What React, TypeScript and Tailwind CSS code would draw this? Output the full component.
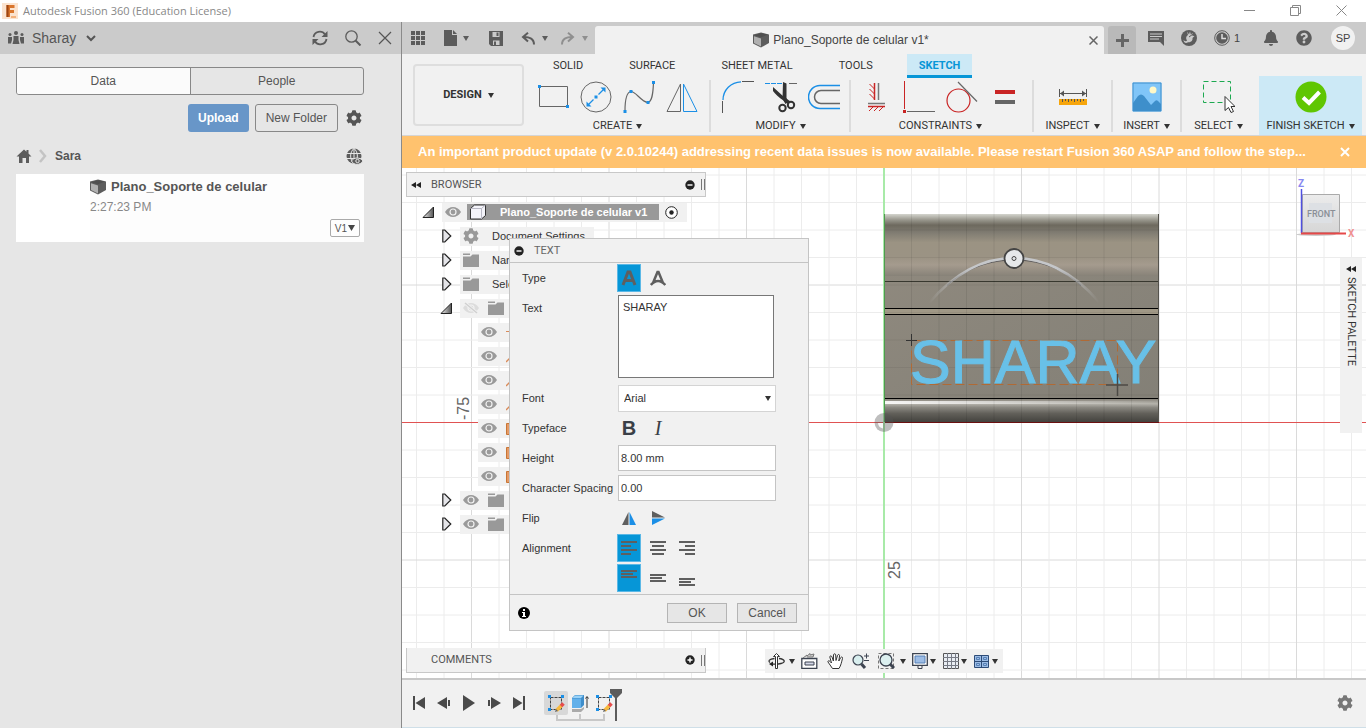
import React from "react";
import { FaBell, FaCog, FaQuestionCircle } from "react-icons/fa";

const caps = "font-[Roboto,'Liberation_Sans',sans-serif] text-[11px] leading-4";

function Caret({ className = "text-[#333]" }) {
  return (
    <svg width="6" height="5" viewBox="0 0 6 5" className={`shrink-0 ${className}`}>
      <path d="M0 0h6L3 5z" fill="currentColor" />
    </svg>
  );
}

function Cube({ size = 16 }) {
  return (
    <svg width={size} height={size} viewBox="0 0 16 16" className="shrink-0">
      <path d="M0 2.500 8 .5l8 2v8.500L8 15.500 0 11.500z" fill="#5c5c5c" />
      <path d="M1 4.200l7 2.300v8L1 11z" fill="#b0b0b0" />
      <path d="M1 3.200 8 1.300 15 2.600 8 5.300z" fill="#4f4f4f" />
    </svg>
  );
}

function Eye({ off = false }) {
  return (
    <svg width="16" height="12" viewBox="0 0 16 12" className="shrink-0">
      <path d="M0 6C2 2.500 5 1 8 1s6 1.500 8 5c-2 3.500-5 5-8 5S2 9.500 0 6z" fill={off ? "#dcdcdc" : "#9a9a9a"} />
      <circle cx="8" cy="6" r="3" fill="none" stroke="#f1f1f1" strokeWidth="1.200" />
      {off && <path d="M2 1l12 10" stroke="#f1f1f1" strokeWidth="3" />}
      {off && <path d="M2 1l12 10" stroke="#d0d0d0" strokeWidth="1.500" />}
    </svg>
  );
}

function Folder() {
  return (
    <svg width="16" height="14" viewBox="0 0 16 14" className="shrink-0">
      <path d="M0 .5h7v1.500H0zM0 3.500h7.500l2-2H16V14H0z" fill="#999" />
    </svg>
  );
}

function Rewind({ className = "" }) {
  return (
    <svg width="10" height="6" viewBox="0 0 10 6" className={className}>
      <path d="M5 0v6L0 3zM10 0v6L5 3z" fill="#222" />
    </svg>
  );
}

function RoundSign({ plus = false }) {
  return (
    <svg width="10" height="10" viewBox="0 0 10 10">
      <circle cx="5" cy="5" r="4.700" fill="#222" />
      <path d={plus ? "M2.500 5h5M5 2.500v5" : "M2.500 5h5"} stroke="#fff" strokeWidth="1.400" />
    </svg>
  );
}

function Expander({ open = false }) {
  return open ? (
    <svg width="12" height="12" viewBox="0 0 12 12" className="shrink-0">
      <defs>
        <linearGradient id="tri" x1="0" x2="1" y1="0" y2="0">
          <stop offset="0" stopColor="#eee" />
          <stop offset="1" stopColor="#555" />
        </linearGradient>
      </defs>
      <path d="M11.500 1v10.500H1z" fill="url(#tri)" stroke="#222" />
    </svg>
  ) : (
    <svg width="10" height="14" viewBox="0 0 10 14" className="shrink-0">
      <path d="M.8 1h2l6 6-6 6h-2z" fill="#e4e4e8" stroke="#222" strokeWidth="1.200" />
    </svg>
  );
}

function TitleBar() {
  return (
    <header className="flex h-[22px] shrink-0 items-center bg-white pr-[2px] pl-[2px] text-[#888]">
      <svg width="16" height="16" viewBox="0 0 16 16">
        <path d="M0 0h16v16H0z" fill="#fbe3cf" />
        <path d="M4.500 2h8v3H8v2h4v3H8v4H4.500z" fill="#d9752c" />
        <path d="M4.500 2h2v12h-2z" fill="#9c4513" />
        <path d="M9 13h5v2H9z" fill="#f3b27d" />
      </svg>
      <h1 className="ml-[5px] font-['Open_Sans','Noto_Sans',sans-serif] text-[11px] leading-4">Autodesk Fusion 360 (Education License)</h1>
      <div className="ml-auto flex items-center pb-[2px]">
        <button aria-label="Minimize" className="flex h-5 w-[46px] items-center justify-center">
          <svg width="11" height="11" viewBox="0 0 11 11"><path d="M0 5.500h11" stroke="#888" /></svg>
        </button>
        <button aria-label="Restore" className="flex h-5 w-[46px] items-center justify-center">
          <svg width="11" height="11" viewBox="0 0 11 11" fill="none" stroke="#888"><path d="M.5 2.500h8v8h-8zM2.500 2.500v-2h8v8h-2" /></svg>
        </button>
        <button aria-label="Close" className="flex h-5 w-[46px] items-center justify-center">
          <svg width="11" height="11" viewBox="0 0 11 11" stroke="#888"><path d="M.5.5l10 10M10.500.5l-10 10" /></svg>
        </button>
      </div>
    </header>
  );
}

function DataPanel() {
  return (
    <aside className="w-[402px] shrink-0 border-r border-[#8a8a8a] bg-[#e6e6e6] text-[#555]">
      <div className="flex h-8 items-center bg-[#cbcbcb] pr-[9px] pl-2">
        <svg width="16" height="14" viewBox="0 0 16 14" fill="#5c5c5c">
          <circle cx="8" cy="2" r="2" />
          <circle cx="2" cy="3.500" r="1.500" />
          <circle cx="14" cy="3.500" r="1.500" />
          <path d="M5.500 5h5v4l1 4h-7l1-4zM0 6h4v3l-1 3.500H0zM12 6h4v6.500h-3L12 9z" />
        </svg>
        <button className="ml-2 flex items-center gap-[10px] text-[14px] leading-5">
          Sharay
          <svg width="10" height="7" viewBox="0 0 10 7" fill="none" stroke="#555" strokeWidth="2"><path d="M1 1l4 4 4-4" /></svg>
        </button>
        <div className="ml-auto flex items-center gap-4">
          <button aria-label="Refresh">
            <svg width="17" height="16" viewBox="0 0 17 16" fill="none" stroke="#5c5c5c" strokeWidth="1.800">
              <path d="M1.500 7A6.300 6.300 0 0 1 13 4.500M14.500 9A6.300 6.300 0 0 1 3 11.500" />
              <path d="M15.500 1v6h-6zM.5 15V9h6z" fill="#5c5c5c" stroke="none" />
            </svg>
          </button>
          <button aria-label="Search">
            <svg width="17" height="16" viewBox="0 0 17 16" fill="none" stroke="#5c5c5c">
              <circle cx="6.500" cy="6.500" r="5.700" strokeWidth="1.300" />
              <path d="M10.500 10.500l5 5" strokeWidth="2" />
            </svg>
          </button>
          <button aria-label="Close panel">
            <svg width="14" height="14" viewBox="0 0 14 14" stroke="#555" strokeWidth="1.200"><path d="M1 1l12 12M13 1L1 13" /></svg>
          </button>
        </div>
      </div>

      <div className="pt-[13px] pr-[37px] pl-4">
        <div className="flex h-7 overflow-hidden rounded-[3px] border border-[#888] text-[12px]">
          <button className="flex-1 border-r border-[#888] bg-[#fbfbfb]">Data</button>
          <button className="flex-1">People</button>
        </div>
        <div className="mt-[9px] flex h-7 items-center justify-end gap-[6px] text-[12px]">
          <button className="h-7 rounded-[3px] bg-[#6896c8] px-[10px] font-bold text-white">Upload</button>
          <button className="h-7 rounded-[3px] border border-[#888] px-[10px]">New Folder</button>
          <button aria-label="Settings" className="mr-[2px] ml-[2px]"><FaCog size={16} /></button>
        </div>
        <div className="mt-4 flex h-4 items-center">
          <svg width="16" height="14" viewBox="0 0 16 14" fill="#5c5c5c">
            <path d="M8 .5l2.500 2.200V1h2v3.500L15.500 7.500H13V14h-3V9H6.500v5H3V7.500H.5z" />
          </svg>
          <svg width="8" height="14" viewBox="0 0 8 14" className="ml-[7px]" fill="none" stroke="#c4c4c4" strokeWidth="2.500"><path d="M1 1l5 6-5 6" /></svg>
          <a href="#sara" className="ml-2 text-[12px] font-bold">Sara</a>
          <svg width="17" height="17" viewBox="0 0 17 17" className="mr-[1px] ml-auto">
            <circle cx="8" cy="8" r="7.500" fill="#5c5c5c" />
            <path d="M0 5.500h16M0 10.500h16M8 0v16M8 .5C3.500 4 3.500 12 8 15.500M8 .5c4.500 3.500 4.500 11.500 0 15" fill="none" stroke="#e6e6e6" />
            <path d="M5.500 13c2-4 9-4 11.500 0-2.500 4.500-9.500 4.500-11.500 0z" fill="#5c5c5c" stroke="#e6e6e6" />
            <circle cx="11.500" cy="13" r="1.700" fill="none" stroke="#e6e6e6" />
          </svg>
        </div>
        <article className="mt-[10px] flex h-[68px] bg-[#fdfdfd]">
          <div className="w-[74px] shrink-0 bg-white" />
          <div className="flex-1 pt-[5px]">
            <h2 className="flex items-center gap-[5px] text-[13px] leading-4 font-bold"><Cube />Plano_Soporte de celular</h2>
            <p className="mt-1 text-[12px] leading-4 text-[#888]">2:27:23 PM</p>
          </div>
          <button className="mr-1 mb-[5px] flex h-[18px] items-center gap-[1px] self-end rounded-[2px] border border-[#aaa] px-1 text-[10px]">
            V1<svg width="7" height="6" viewBox="0 0 7 6"><path d="M0 0h7L3.500 6z" fill="#444" /></svg>
          </button>
        </article>
      </div>
    </aside>
  );
}

function TabBar() {
  return (
    <div className="flex h-8 shrink-0 items-end bg-[#cbcbcb] text-[#5c5c5c]">
      <div className="flex h-8 w-[193px] shrink-0 items-center pl-[9px]">
        <button aria-label="Data panel">
          <svg width="14" height="14" viewBox="0 0 14 14" fill="#5c5c5c">
            <path d="M0 0h4v4H0zM5 0h4v4H5zM10 0h4v4h-4zM0 5h4v4H0zM5 5h4v4H5zM10 5h4v4h-4zM0 10h4v4H0zM5 10h4v4H5zM10 10h4v4h-4z" />
          </svg>
        </button>
        <button aria-label="File" className="ml-[19px] flex items-center gap-[6px]">
          <svg width="13" height="16" viewBox="0 0 13 16" fill="#5c5c5c"><path d="M0 0h8v5h5v11H0zM9 0l4 4H9z" /></svg>
          <Caret className="text-[#5c5c5c]" />
        </button>
        <button aria-label="Save" className="ml-5">
          <svg width="14" height="15" viewBox="0 0 14 15">
            <path d="M0 0h14v15H2l-2-2z" fill="#5c5c5c" />
            <path d="M3.500 1h7v5h-7zM4 9.500h6.500V14H4z" fill="#cbcbcb" />
            <path d="M7.500 1.500h2v3.500h-2zM5 10.500h2V14H5z" fill="#5c5c5c" />
          </svg>
        </button>
        <button aria-label="Undo" className="ml-[18px] flex items-center gap-[7px]">
          <svg width="14" height="13" viewBox="0 0 14 13" fill="none" stroke="#5c5c5c" strokeWidth="2">
            <path d="M2 5c6-.5 11 1.500 11 7.500M7 .8 2 5l5 4.500" />
          </svg>
          <Caret className="text-[#5c5c5c]" />
        </button>
        <button aria-label="Redo" className="ml-[13px] flex items-center gap-[7px]">
          <svg width="14" height="13" viewBox="0 0 14 13" fill="none" stroke="#8f8f8f" strokeWidth="2">
            <path d="M12 5C6 4.500 1 6.500 1 12.500M7 .8 12 5 7 9.500" />
          </svg>
          <Caret className="text-[#8f8f8f]" />
        </button>
      </div>
      <div className="flex h-7 min-w-0 flex-1 items-center rounded-t-[3px] bg-[#f1f1f1] pr-[6px]">
        <div className="flex flex-1 items-center justify-center gap-1 pr-[2px] text-[12px] text-[#444]"><Cube />Plano_Soporte de celular v1*</div>
        <button aria-label="Close document">
          <svg width="9" height="9" viewBox="0 0 9 9" stroke="#666" strokeWidth="1.500"><path d="M.5.5l8 8M8.500.5l-8 8" /></svg>
        </button>
      </div>
      <button aria-label="New document" className="ml-1 flex h-7 w-7 shrink-0 items-center justify-center rounded-t-[3px] bg-[#b9b9b9]">
        <svg width="13" height="13" viewBox="0 0 13 13" stroke="#666" strokeWidth="3"><path d="M0 6.500h13M6.500 0v13" /></svg>
      </button>
      <div className="flex h-8 w-[230px] shrink-0 items-center pl-3">
        <button aria-label="Comments">
          <svg width="16" height="16" viewBox="0 0 16 16">
            <path d="M0 1h16v15l-4-4H0z" fill="#5c5c5c" />
            <path d="M2 4h12M2 6.500h12M2 9h9" stroke="#cbcbcb" />
          </svg>
        </button>
        <button aria-label="Extensions" className="ml-[17px]">
          <svg width="16" height="16" viewBox="0 0 16 16">
            <circle cx="8" cy="8" r="8" fill="#5c5c5c" />
            <path d="M6 1.500l2 3 1-3 .8 3 2-1.500-.6 2.800 2.300.2-2 2c.5 3-2 4.500-4.500 4.200C4.500 14 2.500 12 2.500 10c1.500 1.500 3 1.500 3.500.5C4.500 8.500 5 6 7 5z" fill="#cbcbcb" />
            <path d="M8 7l4-3" stroke="#5c5c5c" />
          </svg>
        </button>
        <button aria-label="Job status" className="ml-[17px] flex items-center gap-1 text-[11px] text-[#444]">
          <svg width="16" height="16" viewBox="0 0 16 16">
            <circle cx="8" cy="8" r="7.300" fill="none" stroke="#5c5c5c" />
            <circle cx="8" cy="8" r="5.800" fill="#5c5c5c" />
            <path d="M8 4v4.500h4" fill="none" stroke="#ddd" strokeWidth="1.500" />
          </svg>
          1
        </button>
        <button aria-label="Notifications" className="ml-[23px]"><FaBell size={16} /></button>
        <button aria-label="Help" className="ml-[17px]"><FaQuestionCircle size={16} /></button>
        <button className="ml-[19px] h-6 w-6 rounded-full bg-[#f1f1f1] text-[11px] text-[#444]">SP</button>
      </div>
    </div>
  );
}

function Tool({ label, children }: { label: string; children: React.ReactNode }) {
  return (
    <button aria-label={label} className="h-8 w-8 shrink-0">
      <svg width="32" height="32" viewBox="0 0 32 32" fill="none">{children}</svg>
    </button>
  );
}

function Group({ name, className, children }: { name: string; className: string; children: React.ReactNode }) {
  return (
    <div className={`flex flex-col items-center pt-[3px] ${className}`}>
      <div className="flex gap-[11px]">{children}</div>
      <button className={`mt-[5px] flex items-center gap-1 whitespace-nowrap text-[#333] ${caps}`}>
        {name} <Caret />
      </button>
    </div>
  );
}

function Divider() {
  return <div className="mt-[2px] h-[52px] w-[2px] shrink-0 bg-[#dcdcdc]" />;
}

function Ribbon() {
  return (
    <div className="flex h-[82px] shrink-0 border-b border-[#d5d5d5] bg-[#f1f1f1]">
      <button className={`mt-[10px] ml-[11px] flex h-[62px] w-[111px] shrink-0 items-center justify-center gap-[6px] rounded-[4px] border-2 border-[#dedede] font-bold text-[#333] ${caps}`}>
        DESIGN <Caret />
      </button>
      <div className="min-w-0 flex-1">
        <nav className={`flex h-6 gap-[22px] pl-[17px] text-[#333] ${caps}`}>
          <button className="px-3">SOLID</button>
          <button className="px-3">SURFACE</button>
          <button className="px-3">SHEET METAL</button>
          <button className="px-3">TOOLS</button>
          <button className="border-b-[3px] border-[#0696d7] bg-[#cce9f6] px-3 pt-[3px] font-bold text-[#0696d7]">SKETCH</button>
        </nav>
        <div className="flex">
          <Group name="CREATE" className="w-[185px] pl-[2px]">
            <Tool label="Rectangle">
              <path d="M2.500 5.500h28v20h-28z" stroke="#666" />
              <path d="M1 4h3v3H1zM29 24h3v3h-3z" fill="#1b8fe6" />
            </Tool>
            <Tool label="Circle">
              <circle cx="16" cy="16" r="15" stroke="#666" />
              <path d="M8.500 23.500l5-5M18.500 13.500l5-5" stroke="#1b8fe6" strokeWidth="1.300" />
              <path d="M6.500 25.500v-5l5 5zM25.500 6.500v5l-5-5zM14.500 14.500h3v3h-3z" fill="#1b8fe6" />
            </Tool>
            <Tool label="Spline">
              <path d="M2 30C2 18 4 11 8 10.500c5 0 10 10.500 17 11 4-1 5-8 5.500-20" stroke="#666" strokeWidth="1.200" />
              <path d="M.5 29h3v3h-3zM6.500 9h3v3h-3zM23.500 20h3v3h-3zM29 0h3v3h-3z" fill="#1b8fe6" />
            </Tool>
            <Tool label="Mirror">
              <path d="M14.500 3v27.500H1z" stroke="#666" />
              <path d="M17.500 3v27.500H31z" stroke="#1b8fe6" />
            </Tool>
          </Group>
          <Divider />
          <Group name="MODIFY" className="w-[138px] pl-px">
            <Tool label="Fillet">
              <path d="M1 19C1 9 9 1 19 .8" stroke="#1b8fe6" strokeWidth="1.300" />
              <path d="M20 .5h12M.5 20v12" stroke="#555" />
            </Tool>
            <Tool label="Trim">
              <path d="M0 2.500h17" stroke="#1b8fe6" strokeDasharray="5 1" />
              <path d="M24 2.500h8" stroke="#666" />
              <path d="M18 1l3.500 1.500V17l2 4-3 2-3-5z" fill="#333" />
              <path d="M8 6l10.500 9.500 7 5-2 2.500-5-3.500C14 16.500 10 13 8 10z" fill="#333" />
              <circle cx="17.500" cy="27" r="3.200" stroke="#333" strokeWidth="2" />
              <circle cx="26" cy="24" r="3.200" stroke="#333" strokeWidth="2" />
            </Tool>
            <Tool label="Offset">
              <path d="M32 4.500H12a11.500 11.500 0 0 0 0 23h20" stroke="#1b8fe6" strokeWidth="1.500" />
              <path d="M32 9.500H13a6.500 6.500 0 0 0 0 13h19" stroke="#666" strokeWidth="1.500" />
            </Tool>
          </Group>
          <Divider />
          <Group name="CONSTRAINTS" className="w-[181px] pr-[2px]">
            <Tool label="Horizontal/Vertical">
              <path d="M14.500 2v17M8 25.500h17" stroke="#c92424" strokeWidth="1.500" />
              <path d="M9.500 3l5 5M9.500 8l5 5M9.500 13l5 5M9 30l4-4M14 30l4-4M19 30l4-4" stroke="#c92424" />
              <path d="M18.500 2v17M8 22.500h17" stroke="#777" strokeWidth="1.500" />
            </Tool>
            <Tool label="Perpendicular">
              <path d="M1.500 0v28" stroke="#c92424" />
              <path d="M0 29h3v3H0z" fill="#c92424" />
              <path d="M4 30.500h28" stroke="#666" />
            </Tool>
            <Tool label="Tangent">
              <circle cx="12.500" cy="19.500" r="11.500" stroke="#c92424" strokeWidth="1.200" />
              <path d="M12 1l19 19.500" stroke="#666" strokeWidth="1.200" />
            </Tool>
            <Tool label="Equal">
              <path d="M6 9h20v4H6z" fill="#c92424" />
              <path d="M6 19h20v4H6z" fill="#666" />
            </Tool>
          </Group>
          <Divider />
          <Group name="INSPECT" className="w-[77px]">
            <Tool label="Measure">
              <path d="M2.500 8v8M29.500 8v8M3 12.500h26" stroke="#555" />
              <path d="M3 12.500l4-3v6zM29 12.500l-4-3v6z" fill="#555" />
              <path d="M2 18h28v6H2z" fill="#f6a50c" />
              <path d="M5.500 18v3M8.500 18v2M11.500 18v3M14.500 18v2M17.500 18v3M20.500 18v2M23.500 18v3M26.500 18v2" stroke="#555" />
            </Tool>
          </Group>
          <Divider />
          <Group name="INSERT" className="w-[67px]">
            <Tool label="Insert image">
              <path d="M1.500 1.500h29v29h-29z" fill="#80c5f8" />
              <path d="M2 22l5-7c2-2 4-2 6 0l7 9 4-4c1-1 2-1 3 0l3 3v7H2z" fill="#3e8fcb" />
              <path d="M2 2h28v28H2z" stroke="#3e8fcb" />
              <circle cx="22" cy="9" r="3.500" fill="#fff8c8" />
            </Tool>
          </Group>
          <Divider />
          <Group name="SELECT" className="w-[73px]">
            <Tool label="Select">
              <path d="M.5.5h27v21H.5z" stroke="#1ca950" strokeDasharray="5 3" />
              <path d="M22 15.500v14l3.500-3 2.500 5 2.500-1-2.500-5h4z" fill="#fff" stroke="#333" />
            </Tool>
          </Group>
          <div className="-mt-[2px] mr-1 ml-auto h-[59px] bg-[#cce9f6] pt-[2px]">
            <Group name="FINISH SKETCH" className="w-[103px]">
              <Tool label="Finish sketch">
                <circle cx="16" cy="16" r="15.500" fill="#60c602" />
                <path d="M8 16.500l6 5.500 10.500-11" stroke="#fff" strokeWidth="4" />
              </Tool>
            </Group>
          </div>
        </div>
      </div>
    </div>
  );
}

function UpdateBanner() {
  return (
    <div role="alert" className="flex h-8 shrink-0 items-center bg-[#ffc26e] pr-4 pl-4 text-[13px] font-bold text-white">
      <p className="min-w-0 flex-1 truncate">An important product update (v 2.0.10244) addressing recent data issues is now available. Please restart Fusion 360 ASAP and follow the step...</p>
      <button aria-label="Dismiss" className="ml-4">
        <svg width="10" height="10" viewBox="0 0 10 10" stroke="#fff" strokeWidth="2"><path d="M1 1l8 8M9 1L1 9" /></svg>
      </button>
    </div>
  );
}

// origin sits at (482, 254.5) and one cell is 27.5 units wide
function Viewport() {
  const steps = Array.from({ length: 81 }, (_, i) => i - 30);
  const shade = (i: number) => (i % 5 === 0 ? "#dadada" : "#ececec");
  return (
    <svg className="absolute inset-0 h-full w-full">
      <defs>
        <linearGradient id="top" x1="0" x2="0" y1="0" y2="1">
          <stop offset="0" stopColor="#d4d5ce" />
          <stop offset=".1" stopColor="#96948a" />
          <stop offset=".18" stopColor="#6d695e" />
          <stop offset=".3" stopColor="#807c72" />
          <stop offset=".46" stopColor="#9b9383" />
          <stop offset=".7" stopColor="#9b9384" />
          <stop offset=".82" stopColor="#a59b8e" />
          <stop offset="1" stopColor="#878278" />
        </linearGradient>
        <linearGradient id="foot" x1="0" x2="0" y1="0" y2="1">
          <stop offset="0" stopColor="#88847b" />
          <stop offset=".2" stopColor="#b5b3ab" />
          <stop offset=".35" stopColor="#8b8982" />
          <stop offset=".6" stopColor="#62605a" />
          <stop offset="1" stopColor="#403f3b" />
        </linearGradient>
        <linearGradient id="shine" x1="0" x2="1" y1="0" y2="0">
          <stop offset="0" stopColor="#fff" stopOpacity=".9" />
          <stop offset="1" stopColor="#fff" stopOpacity="0" />
        </linearGradient>
        <linearGradient id="arc" x1="0" x2="1" y1="0" y2="0">
          <stop offset="0" stopColor="#c5c7ca" stopOpacity="0" />
          <stop offset=".25" stopColor="#c5c7ca" />
          <stop offset=".75" stopColor="#c5c7ca" />
          <stop offset="1" stopColor="#c5c7ca" stopOpacity="0" />
        </linearGradient>
        <linearGradient id="body" x1="0" x2="1" y1="0" y2="1">
          <stop offset="0" stopColor="#8f897e" />
          <stop offset="1" stopColor="#827f76" />
        </linearGradient>
      </defs>
      {steps.map((i) => (
        <g key={i}>
          <path d={`M${482 + i * 27.5} 0v1200`} stroke={shade(i)} />
          <path d={`M0 ${254.5 + i * 27.5}h2600`} stroke={shade(i)} />
        </g>
      ))}
      <rect x="482" y="98" width="275" height="157" fill="url(#body)" />
      <rect x="482" y="46" width="275" height="62" fill="url(#top)" />
      <rect x="482" y="141" width="275" height="5" fill="#a09886" />
      <rect x="482" y="231" width="275" height="24" fill="url(#foot)" />
      <rect x="482" y="233" width="275" height="3" fill="url(#shine)" />
      <path d="M482 113.500h275" stroke="#38382f" />
      <path d="M482 140.500h275M482 146.500h275M482 230.500h275" stroke="#000" />
      <path d="M756.500 46v208" stroke="#55534d" />
      {steps.filter((i) => i > 0 && i < 10).map((i) => (
        <path key={i} d={`M${482 + i * 27.5} 46v208`} stroke="#000" opacity=".07" />
      ))}
      {steps.filter((i) => i < 0 && i > -8).map((i) => (
        <path key={i} d={`M482 ${254.5 + i * 27.5}h275`} stroke="#000" opacity=".05" />
      ))}
      <path d="M0 254.500h2600" stroke="#e05252" />
      <path d="M482 254.500h275" stroke="#6b1010" />
      <path d="M482 0v1200" stroke="#a8eaa8" strokeWidth="2" />
      <path d="M482.500 46v208" stroke="#4f9a4f" />
      <path d="M545 117.500C565 99 590 92 612 92S660 99 679 117.500" fill="none" stroke="#4a4a50" opacity=".8" />
      <path d="M527 135C555 102 585 90 612 90S670 102 697 134" fill="none" stroke="url(#arc)" strokeWidth="2.500" />
      <circle cx="612" cy="90.500" r="9.500" fill="#e6e8ea" stroke="#444" strokeWidth="1.800" />
      <circle cx="612" cy="90.500" r="2" fill="none" stroke="#444" />
      <path d="M509.500 172.500h206v44h-206z" fill="none" stroke="#b06a35" strokeDasharray="9 4" />
      <text x="508" y="215" fill="#68c0e8" stroke="#68c0e8" fontSize="61" className="font-['Liberation_Sans',Arial,sans-serif]">SHARAY</text>
      <path d="M504 172.500h11M509.500 166v12" stroke="#333" />
      <path d="M704 217h22M715.500 206v22" stroke="#4c4a45" strokeWidth="1.500" />
      <circle cx="482" cy="254.500" r="9.500" fill="#555" opacity=".38" />
      <path d="M481 255h-5a6 6 0 0 0 5 5.500z" fill="#fff" opacity=".9" />
      <text transform="translate(67 252) rotate(-90)" fill="#666" fontSize="16" className="font-['Liberation_Sans',Arial,sans-serif]">-75</text>
      <text transform="translate(498 411) rotate(-90)" fill="#666" fontSize="16" className="font-['Liberation_Sans',Arial,sans-serif]">25</text>
    </svg>
  );
}

function BrowserTree() {
  return (
    <section className="absolute top-1 left-1 w-[300px] text-[11px] text-[#333]">
      <header className={`flex h-[25px] items-center border border-[#c8c8c8] bg-[#f1f1f1] pl-1 text-[#555] ${caps}`}>
        <Rewind />
        <h2 className="ml-[10px]">BROWSER</h2>
        <div className="ml-auto flex items-center gap-[6px]">
          <RoundSign />
          <span className="h-[11px] w-1 border-x border-[#777]" />
        </div>
      </header>
      <ul className="pt-[3px]">
        <li className="flex h-6 items-center pl-4">
          <Expander open />
          <div className="ml-2 flex h-[19px] items-center bg-[#f1f1f1] px-[3px]">
            <Eye />
            <div className="ml-[6px] flex h-4 items-center bg-[#999] pr-3 pl-[2px] font-bold text-white">
              <svg width="18" height="16" viewBox="0 0 18 16" className="mr-[13px]">
                <path d="M1.500 4.500l4-3.500h11v10.500l-4 3.500h-11z" fill="#f4f4fa" stroke="#333" />
                <path d="M1.500 4.500h11V15M12.500 4.500l4-3.500" fill="none" stroke="#b9b9c5" />
              </svg>
              Plano_Soporte de celular v1
            </div>
            <svg width="13" height="13" viewBox="0 0 13 13" className="mr-[6px] ml-[6px]">
              <circle cx="6.500" cy="6.500" r="5.800" fill="#fff" stroke="#222" />
              <circle cx="6.500" cy="6.500" r="2.200" fill="#222" />
            </svg>
          </div>
        </li>
        <li className="flex h-6 items-center pl-9">
          <Expander />
          <div className="ml-2 flex h-[19px] items-center gap-[13px] bg-[#f1f1f1] pr-[9px] pl-[3px]"><FaCog size={16} color="#999" />Document Settings</div>
        </li>
        <li className="flex h-6 items-center pl-9">
          <Expander />
          <div className="ml-2 flex h-[19px] items-center gap-[13px] bg-[#f1f1f1] pl-[3px]"><Folder />Nam</div>
        </li>
        <li className="flex h-6 items-center pl-9">
          <Expander />
          <div className="ml-2 flex h-[19px] items-center gap-[13px] bg-[#f1f1f1] pl-[3px]"><Folder />Sele</div>
        </li>
        <li className="flex h-6 items-center pl-[34px]">
          <Expander open />
          <div className="ml-2 flex h-[19px] w-20 items-center gap-[9px] bg-[#f1f1f1] pl-[3px]"><Eye off /><Folder /></div>
        </li>
        {["point", "axis", "axis", "axis", "plane", "plane", "plane"].map((kind, i) => (
          <li key={i} className="flex h-6 items-center pl-[72px]">
            <div className="flex h-[19px] w-20 items-center gap-[9px] bg-[#f1f1f1] pl-[3px]">
              <Eye />
              <svg width="14" height="14" viewBox="0 0 14 14">
                {kind === "point" && <path d="M0 6.500h13M6.500 0v13" stroke="#d98b5a" />}
                {kind === "axis" && <path d="M0 13L13 0" stroke="#d98b5a" strokeWidth="1.500" />}
                {kind === "plane" && <path d="M.5 2.500h12v11H.5z" fill="#e59a66" stroke="#c87636" />}
              </svg>
            </div>
          </li>
        ))}
        {[0, 1].map((i) => (
          <li key={i} className="flex h-6 items-center pl-9">
            <Expander />
            <div className="ml-2 flex h-[19px] w-20 items-center gap-[9px] bg-[#f1f1f1] pl-[3px]"><Eye /><Folder /></div>
          </li>
        ))}
      </ul>
    </section>
  );
}

function Lines({ rows }: { rows: number[][] }) {
  return (
    <svg width="16" height="16" viewBox="0 0 16 16" fill="#5f5f5f">
      {rows.map(([x, y, w]) => <rect key={y} x={x} y={y} width={w} height="2" />)}
    </svg>
  );
}

function Pick({ on = false, label, children }: { on?: boolean; label: string; children: React.ReactNode }) {
  return (
    <button
      type="button"
      aria-label={label}
      aria-pressed={on}
      className={`flex h-7 w-6 items-center justify-center border ${on ? "border-[#5bb8e6] bg-[#0696d7]" : "border-transparent"}`}
    >
      {children}
    </button>
  );
}

function TextDialog() {
  return (
    <form className="absolute top-[70px] left-[107px] w-[300px] border border-[#c4c4c4] bg-[#f1f1f1] text-[11px] text-[#333]" onSubmit={(e) => e.preventDefault()}>
      <div className={`flex h-6 items-center gap-[10px] border-b border-[#c4c4c4] pl-1 text-[#666] ${caps}`}>
        <RoundSign />
        <h2>TEXT</h2>
      </div>
      <div className="grid grid-cols-[96px_1fr] pr-8 pb-px pl-3 leading-[30px]">
        <span>Type</span>
        <div className="-ml-[1px] flex h-[30px] items-center gap-[5px]">
          <Pick on label="Text">
            <svg width="16" height="16" viewBox="0 0 16 16" fill="none" stroke="#5f5f5f" strokeWidth="3"><path d="M2 15L7 2h2l5 13M4 10.500h8" /></svg>
          </Pick>
          <Pick label="Text on path">
            <svg width="16" height="16" viewBox="0 0 16 16" fill="none" stroke="#5f5f5f" strokeWidth="2.500"><path d="M3 13L7.500 2h1L13 13M.8 15c4.500-5.500 10-5.500 14.500 0" /></svg>
          </Pick>
        </div>
        <label htmlFor="text">Text</label>
        <div className="h-[90px] pt-[2px] pr-[2px]">
          <textarea id="text" defaultValue="SHARAY" className="block h-[83px] w-full resize-none border border-[#777] bg-white px-1 py-[3px] leading-4 outline-none" />
        </div>
        <label htmlFor="font">Font</label>
        <div className="relative flex h-[30px] items-center">
          <select id="font" className="h-[27px] w-full appearance-none border border-[#d4d4d4] bg-white pl-[5px] leading-4">
            <option>Arial</option>
          </select>
          <div className="pointer-events-none absolute right-[5px]"><Caret /></div>
        </div>
        <span>Typeface</span>
        <div className="-ml-[1px] flex h-[30px] items-center gap-[5px] text-[#3a3f47]">
          <Pick label="Bold"><b className="text-[20px]">B</b></Pick>
          <Pick label="Italic"><i className="font-['Liberation_Serif',serif] text-[20px]">I</i></Pick>
        </div>
        <label htmlFor="height">Height</label>
        <div className="flex h-[30px] items-center">
          <input id="height" defaultValue="8.00 mm" className="h-[26px] w-full border border-[#c4c4c4] bg-white px-[2px]" />
        </div>
        <label htmlFor="spacing" className="whitespace-nowrap">Character Spacing</label>
        <div className="flex h-[30px] items-center">
          <input id="spacing" defaultValue="0.00" className="h-[26px] w-full border border-[#c4c4c4] bg-white px-[2px]" />
        </div>
        <span>Flip</span>
        <div className="-ml-[1px] flex h-[30px] items-center gap-[5px]">
          <Pick label="Flip horizontal">
            <svg width="14" height="13" viewBox="0 0 14 13"><path d="M6.500 0v13H0z" fill="#5f5f5f" /><path d="M7.500 0v13H14z" fill="#1b8fe6" /></svg>
          </Pick>
          <Pick label="Flip vertical">
            <svg width="13" height="14" viewBox="0 0 13 14"><path d="M0 6.500h13L0 0z" fill="#5f5f5f" /><path d="M0 7.500h13L0 14z" fill="#1b8fe6" /></svg>
          </Pick>
        </div>
        <span>Alignment</span>
        <div className="-ml-[1px] flex h-[30px] items-center gap-[5px]">
          <Pick on label="Left"><Lines rows={[[0, 1, 16], [0, 5, 10], [0, 9, 16], [0, 13, 10]]} /></Pick>
          <Pick label="Center"><Lines rows={[[0, 1, 16], [2, 5, 12], [0, 9, 16], [2, 13, 12]]} /></Pick>
          <Pick label="Right"><Lines rows={[[0, 1, 16], [6, 5, 10], [0, 9, 16], [6, 13, 10]]} /></Pick>
        </div>
        <span />
        <div className="-ml-[1px] flex h-[30px] items-center gap-[5px]">
          <Pick on label="Top"><Lines rows={[[0, 0, 16], [0, 3, 12], [0, 6, 16]]} /></Pick>
          <Pick label="Middle"><Lines rows={[[0, 4, 16], [0, 7, 12], [0, 10, 16]]} /></Pick>
          <Pick label="Bottom"><Lines rows={[[0, 8, 16], [0, 11, 12], [0, 14, 16]]} /></Pick>
        </div>
      </div>
      <div className="flex h-9 items-center border-t border-[#c4c4c4] pr-[11px] pl-2 text-[12px] text-[#555]">
        <button type="button" aria-label="Info">
          <svg width="12" height="12" viewBox="0 0 12 12">
            <circle cx="6" cy="6" r="6" fill="#000" />
            <path d="M5 2h2v2H5zM4 5h3v4h1v1H4V9h1V6H4z" fill="#fff" />
          </svg>
        </button>
        <button className="ml-auto h-5 w-[60px] border border-[#b4b4b4] bg-[#e6e6e6]">OK</button>
        <button type="button" className="ml-[10px] h-5 w-[60px] border border-[#b4b4b4] bg-[#e6e6e6]">Cancel</button>
      </div>
    </form>
  );
}

function ViewCube() {
  return (
    <svg width="66" height="66" viewBox="0 0 66 66" className="absolute top-2 right-2">
      <defs>
        <linearGradient id="face" x1="0" x2="0" y1="0" y2="1">
          <stop offset="0" stopColor="#ececec" />
          <stop offset="1" stopColor="#d6d6d6" />
        </linearGradient>
      </defs>
      <ellipse cx="24" cy="58.500" rx="20" ry="1.500" fill="#ccc" />
      <path d="M10.500 18.500h37v38h-37z" fill="url(#face)" stroke="#aaa" />
      <path d="M17 27h23v20H17z" fill="#dde0e4" />
      <path d="M9.500 13v44" stroke="#5050e0" strokeWidth="1.500" />
      <path d="M9 57.500h45" stroke="#e64848" strokeWidth="2" />
      <text x="15" y="41" fontSize="9" fill="#8a8f96" className="font-[Roboto,sans-serif] font-medium">FRONT</text>
      <text x="6" y="11" fontSize="10" fill="#8888f0" className="font-[Roboto,sans-serif] font-bold">Z</text>
      <text x="56" y="61" fontSize="10" fill="#f09090" className="font-[Roboto,sans-serif] font-bold">X</text>
    </svg>
  );
}

function NavTools() {
  return (
    <div className="absolute inset-x-0 bottom-[5px] flex justify-center">
      <div className="flex h-6 items-center bg-[#f1f1f1] px-[3px]">
        <button aria-label="Orbit" className="flex items-center gap-1">
          <svg width="17" height="16" viewBox="0 0 17 16" fill="none" stroke="#333">
            <path d="M6.500 5.500C1 6 0 8 2 9.500M11 5.500c6 .5 7 4 2 5-3 .8-6 .8-9 .5" strokeWidth="1.300" />
            <path d="M7.500 15.500V3.500h-2l3-3 3 3h-2v12z" fill="#fff" />
            <path d="M1 11l4-2.500v5z" fill="#222" stroke="none" />
          </svg>
          <Caret />
        </button>
        <button aria-label="Look at" className="ml-[6px]">
          <svg width="17" height="16" viewBox="0 0 17 16" fill="none" stroke="#3c4350">
            <path d="M.8 5.500h15v10h-15z" fill="#fff" strokeWidth="1.300" />
            <path d="M4 9h9v3H4z" fill="#d4d8e8" />
            <path d="M2 5l4-3v1l3-2.500V2l4-1-1 3H6" fill="#ccc" stroke="#777" />
          </svg>
        </button>
        <button aria-label="Pan" className="ml-[9px]">
          <svg width="17" height="17" viewBox="0 0 17 17">
            <path d="M5.500 15.500L1 9c-.5-1.200 1-1.800 2-.5l1.500 1.500L2.800 4c0-1.500 1.700-1.500 2.200 0l1.400 4L6.500 1.800c.2-1.300 2-1.300 2.200 0L9 7.500l1.600-5.200c.5-1.300 2-1 2 .4L11.800 8l2-3.500c.8-1 2-.5 1.700.8-1 4-1.500 7-3.500 10.200z" fill="#fff" stroke="#333" />
          </svg>
        </button>
        <button aria-label="Zoom" className="ml-[8px]">
          <svg width="17" height="16" viewBox="0 0 17 16" fill="none" stroke="#3c4350">
            <circle cx="6" cy="7" r="5" fill="#d8eeee" strokeWidth="1.200" />
            <path d="M9.500 11l3.500 4" strokeWidth="3" />
            <path d="M12 3h5M14.500.5v5M12 7.500h5" />
          </svg>
        </button>
        <button aria-label="Fit" className="ml-[9px] flex items-center gap-[5px]">
          <svg width="17" height="16" viewBox="0 0 17 16" fill="none" stroke="#3c4350">
            <path d="M.5.5h15v15H.5z" stroke="#777" strokeDasharray="3 2" />
            <circle cx="8" cy="7" r="6" fill="#dcf0f0" strokeWidth="1.300" />
            <path d="M12 11l4 4" strokeWidth="3" />
          </svg>
          <Caret />
        </button>
        <button aria-label="Display settings" className="ml-[6px] flex items-center gap-[2px]">
          <svg width="16" height="16" viewBox="0 0 16 16" fill="none" stroke="#3c4350">
            <path d="M.7.7h14.600v11.600H.7z" fill="#fff" strokeWidth="1.300" />
            <path d="M3 3h10v7H3z" fill="#9dbde6" stroke="#5780b5" />
            <path d="M6 13v2.500h4V13" />
          </svg>
          <Caret />
        </button>
        <button aria-label="Grid settings" className="ml-[7px] flex items-center gap-[2px]">
          <svg width="16" height="16" viewBox="0 0 16 16" fill="none" stroke="#555">
            <path d="M.5.5h15v15H.5z" fill="#e9edf3" />
            <path d="M4.500 0v16M8.500 0v16M12.500 0v16M0 4.500h16M0 8.500h16M0 12.500h16" stroke="#777b85" />
          </svg>
          <Caret />
        </button>
        <button aria-label="Viewports" className="mr-[2px] ml-[7px] flex items-center gap-[3px]">
          <svg width="15" height="13" viewBox="0 0 15 13" fill="#9dbde6" stroke="#2d4c78">
            <path d="M.5.5h14v12H.5zM7.500.5v12M.5 6.500h14" />
            <path d="M2.500 2.500h3v2h-3zM9.500 2.500h3v2h-3zM2.500 8.500h3v2h-3zM9.500 8.500h3v2h-3z" stroke="#5780b5" />
          </svg>
          <Caret />
        </button>
      </div>
    </div>
  );
}

function SketchGlyph() {
  return (
    <svg width="17" height="17" viewBox="0 0 17 17" fill="none">
      <path d="M2.500 2.500h11v12h-11z" stroke="#444" strokeDasharray="3 1" />
      <path d="M0 0h3v3H0zM13 0h3v3h-3zM0 13h3v3H0z" fill="#1b8fe6" />
      <path d="M8.500 15.500l5-5" stroke="#f7b93e" strokeWidth="3.500" />
      <path d="M13 11l2.500-2.500" stroke="#e64c4c" strokeWidth="3.500" />
      <path d="M7 17l1-3 2 2z" fill="#666" />
    </svg>
  );
}

function Timeline() {
  return (
    <footer className="flex h-[50px] shrink-0 items-center border-t-2 border-b border-t-[#c8c8c8] border-b-[#cfdfe8] bg-[#f1f1f1] pr-[13px] pb-px pl-[11px]">
      <div className="flex items-center gap-[12px]">
        <button aria-label="Go to start"><svg width="12" height="14" viewBox="0 0 12 14" fill="#4a4a4a"><path d="M0 0h2v14H0zM12 1v12L2.500 7z" /></svg></button>
        <button aria-label="Step back"><svg width="13" height="14" viewBox="0 0 13 14" fill="#4a4a4a"><path d="M10 1v12L0 7zM11 4h2v6h-2z" /></svg></button>
        <button aria-label="Play"><svg width="14" height="16" viewBox="0 0 14 16" fill="#4a4a4a"><path d="M1 0v16l12-8z" /></svg></button>
        <button aria-label="Step forward"><svg width="13" height="14" viewBox="0 0 13 14" fill="#4a4a4a"><path d="M3 1v12l10-6zM0 4h2v6H0z" /></svg></button>
        <button aria-label="Go to end"><svg width="12" height="14" viewBox="0 0 12 14" fill="#4a4a4a"><path d="M10 0h2v14h-2zM0 1v12l9.500-6z" /></svg></button>
      </div>
      <div className="relative ml-[19px] flex">
        <button aria-label="Sketch 1" className="flex h-6 w-6 items-center justify-center rounded-[2px] bg-[#d8d8d8]"><SketchGlyph /></button>
        <button aria-label="Extrude" className="flex h-6 w-6 items-center justify-center">
          <svg width="17" height="17" viewBox="0 0 17 17">
            <path d="M0 14l9 0 3-2v2l-3 3H0z" fill="#aaa" />
            <path d="M0 3l3-3h9v10l-3 3H0z" fill="#3f8ecb" />
            <path d="M0 3.500h9V13H0z" fill="#62b0ea" />
            <path d="M.5 3l2.500-2.500h8.500L9 3z" fill="#9ad2f7" />
            <path d="M15 2v11M13.500 3.500L15 1.500l1.500 2" fill="none" stroke="#333" />
          </svg>
        </button>
        <button aria-label="Sketch 2" className="flex h-6 w-6 items-center justify-center"><SketchGlyph /></button>
        <svg width="52" height="8" viewBox="0 0 52 8" className="absolute top-[23px] left-3" fill="none" stroke="#c8c8c8" strokeWidth="2">
          <path d="M1 1v5h47V0M24 0v6" />
        </svg>
        <svg width="12" height="32" viewBox="0 0 12 32" className="absolute -top-[2px] left-[66px]" fill="#5c5c5c">
          <path d="M0 0h12v4L7 9v23H5V9L0 4z" />
        </svg>
      </div>
      <button aria-label="Timeline settings" className="ml-auto"><FaCog size={16} color="#777" /></button>
    </footer>
  );
}

export default function App() {
  return (
    <div className="flex h-screen flex-col overflow-hidden bg-white font-['Liberation_Sans',Arial,sans-serif]">
      <TitleBar />
      <div className="flex min-h-0 flex-1">
        <DataPanel />
        <main className="flex min-w-0 flex-1 flex-col">
          <TabBar />
          <Ribbon />
          <UpdateBanner />
          <div className="relative min-h-0 flex-1 overflow-hidden">
            <Viewport />
            <BrowserTree />
            <TextDialog />
            <ViewCube />
            <button className="absolute top-[90px] right-1 flex h-[175px] w-[22px] flex-col items-center bg-[#f1f1f1] pt-2">
              <Rewind />
              <span className={`mt-[5px] text-[#333] [writing-mode:vertical-rl] ${caps}`}>SKETCH PALETTE</span>
            </button>
            <section className={`absolute bottom-[5px] left-1 flex h-[25px] w-[300px] items-center border border-t-0 border-[#c8c8c8] bg-[#f1f1f1] pl-6 text-[#555] ${caps}`}>
              <h2>COMMENTS</h2>
              <div className="ml-auto flex items-center gap-[6px]">
                <RoundSign plus />
                <span className="h-[11px] w-1 border-x border-[#777]" />
              </div>
            </section>
            <NavTools />
          </div>
          <Timeline />
        </main>
      </div>
    </div>
  );
}
